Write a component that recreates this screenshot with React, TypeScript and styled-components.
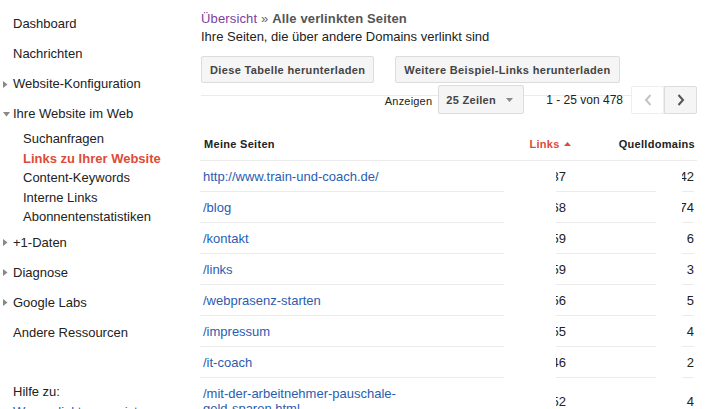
import React from "react";
import styled, { createGlobalStyle } from "styled-components";

const GlobalStyle = createGlobalStyle`
  html, body {
    margin: 0;
    padding: 0;
    background: #fff;
  }
  body {
    font-family: "Liberation Sans", Arial, sans-serif;
    font-size: 13px;
    color: #222;
    overflow: hidden;
  }
`;

interface INavItem {
  label: string;
  arrow?: "right" | "down";
  children?: { label: string; active?: boolean }[];
}

const nav: INavItem[] = [
  { label: "Dashboard" },
  { label: "Nachrichten" },
  { label: "Website-Konfiguration", arrow: "right" },
  {
    label: "Ihre Website im Web",
    arrow: "down",
    children: [
      { label: "Suchanfragen" },
      { label: "Links zu Ihrer Website", active: true },
      { label: "Content-Keywords" },
      { label: "Interne Links" },
      { label: "Abonnentenstatistiken" },
    ],
  },
  { label: "+1-Daten", arrow: "right" },
  { label: "Diagnose", arrow: "right" },
  { label: "Google Labs", arrow: "right" },
  { label: "Andere Ressourcen" },
];

interface IRow {
  page: string;
  links: string;
  domains: string;
}

const rows: IRow[] = [
  { page: "http://www.train-und-coach.de/", links: "337", domains: "142" },
  { page: "/blog", links: "568", domains: "174" },
  { page: "/kontakt", links: "559", domains: "6" },
  { page: "/links", links: "559", domains: "3" },
  { page: "/webprasenz-starten", links: "556", domains: "5" },
  { page: "/impressum", links: "555", domains: "4" },
  { page: "/it-coach", links: "446", domains: "2" },
  { page: "/mit-der-arbeitnehmer-pauschale-geld-sparen.html", links: "552", domains: "4" },
];

const Arrow = ({ dir }: { dir: "right" | "down" }) => (
  <ArrowBox>
    {dir === "right" ? (
      <svg width="5" height="7" viewBox="0 0 5 7">
        <path d="M0 0 L4.5 3.5 L0 7 Z" fill="#888" />
      </svg>
    ) : (
      <svg width="7" height="5" viewBox="0 0 7 5">
        <path d="M0 0 L7 0 L3.5 4.5 Z" fill="#888" />
      </svg>
    )}
  </ArrowBox>
);

const Chevron = ({ dir, color }: { dir: "left" | "right"; color: string }) => (
  <svg width="8" height="12" viewBox="0 0 8 12">
    <path
      d={dir === "left" ? "M6.5 1 L2 6 L6.5 11" : "M1.5 1 L6 6 L1.5 11"}
      stroke={color}
      strokeWidth="2"
      fill="none"
    />
  </svg>
);

const App = () => {
  return (
    <>
      <GlobalStyle />
      <Page>
        <Sidebar>
          {nav.map(item => (
            <React.Fragment key={item.label}>
              <NavItem>
                {item.arrow ? <Arrow dir={item.arrow} /> : null}
                {item.label}
              </NavItem>
              {item.children ? (
                <SubList>
                  {item.children.map(c => (
                    <SubItem key={c.label} active={c.active}>
                      {c.label}
                    </SubItem>
                  ))}
                </SubList>
              ) : null}
            </React.Fragment>
          ))}
          <Separator />
          <HelpTitle>Hilfe zu:</HelpTitle>
          <HelpLink>Wer verlinkt am meisten</HelpLink>
        </Sidebar>

        <Main>
          <Breadcrumb>
            <Crumb>Übersicht</Crumb>
            <Raquo> » </Raquo>
            <CurrentCrumb>Alle verlinkten Seiten</CurrentCrumb>
          </Breadcrumb>
          <Subtitle>Ihre Seiten, die über andere Domains verlinkt sind</Subtitle>

          <ButtonRow>
            <Button>Diese Tabelle herunterladen</Button>
            <Button>Weitere Beispiel-Links herunterladen</Button>
          </ButtonRow>

          <Toolbar>
            <ShowLabel>Anzeigen</ShowLabel>
            <Select>
              <span>25 Zeilen</span>
              <svg width="7" height="4" viewBox="0 0 7 4">
                <path d="M0 0 L7 0 L3.5 4 Z" fill="#888" />
              </svg>
            </Select>
            <Range>1 - 25 von 478</Range>
            <Pager>
              <PagerButton>
                <Chevron dir="left" color="#c4c4c4" />
              </PagerButton>
              <PagerButton active>
                <Chevron dir="right" color="#555" />
              </PagerButton>
            </Pager>
          </Toolbar>

          <Table>
            <HeadRow>
              <HeadPage>Meine Seiten</HeadPage>
              <HeadLinks>
                Links
                <svg width="7" height="4" viewBox="0 0 7 4">
                  <path d="M0 4 L3.5 0 L7 4 Z" fill="#dd4b39" />
                </svg>
              </HeadLinks>
              <HeadDomains>Quelldomains</HeadDomains>
            </HeadRow>
            {rows.map(r => (
              <Row key={r.page}>
                <PageCell>
                  <PageLink>{r.page}</PageLink>
                </PageCell>
                <Gap w={52} />
                <LinksCell>
                  <NumClip w={10}>{r.links}</NumClip>
                </LinksCell>
                <Gap w={26} />
                <DomainsCell>
                  <NumClip w={12}>{r.domains}</NumClip>
                </DomainsCell>
              </Row>
            ))}
          </Table>
        </Main>
      </Page>
    </>
  );
};

export default App;

const Page = styled.div`
  display: flex;
  width: 721px;
  height: 409px;
  overflow: hidden;
`;
const Sidebar = styled.nav`
  width: 188px;
  flex-shrink: 0;
  padding-top: 9px;
  display: flex;
  flex-direction: column;
`;
const NavItem = styled.div`
  height: 30px;
  line-height: 30px;
  padding-left: 13px;
  position: relative;
  color: #222;
  white-space: nowrap;
`;
const ArrowBox = styled.span`
  position: absolute;
  left: 3px;
  top: 0;
  height: 30px;
  display: flex;
  align-items: center;
`;
const SubList = styled.div`
  padding: 0 0 1px 23px;
`;
const SubItem = styled.div<{ active?: boolean }>`
  height: 19.5px;
  line-height: 19.5px;
  white-space: nowrap;
  color: ${p => (p.active ? "#dd4b39" : "#222")};
  font-weight: ${p => (p.active ? "bold" : "normal")};
`;
const Separator = styled.div`
  width: 190px;
  height: 1px;
  background: #ebebeb;
  margin-top: 10px;
`;
const HelpTitle = styled.div`
  margin-top: 26px;
  padding-left: 13px;
  line-height: 16px;
  color: #222;
`;
const HelpLink = styled.div`
  margin-top: 4px;
  padding-left: 13px;
  line-height: 16px;
  color: #2a5db0;
  white-space: nowrap;
`;
const Main = styled.main`
  flex: 1;
  padding: 10px 24px 0 13px;
  min-width: 0;
`;
const Breadcrumb = styled.div`
  line-height: 18px;
  white-space: nowrap;
  letter-spacing: 0.15px;
`;
const Crumb = styled.span`
  color: #7b3f9e;
`;
const Raquo = styled.span`
  color: #666;
`;
const CurrentCrumb = styled.span`
  color: #555;
  font-weight: bold;
`;
const Subtitle = styled.div`
  line-height: 18px;
  color: #222;
  white-space: nowrap;
`;
const ButtonRow = styled.div`
  display: flex;
  gap: 21px;
  margin-top: 10px;
`;
const Button = styled.button`
  height: 27px;
  padding: 0 8px;
  background: #f5f5f5;
  border: 1px solid #dcdcdc;
  border-radius: 2px;
  color: #444;
  font-family: "Liberation Sans", Arial, sans-serif;
  font-size: 11px;
  font-weight: bold;
  letter-spacing: 0.35px;
  white-space: nowrap;
`;
const Toolbar = styled.div`
  margin-top: 2px;
  height: 29px;
  display: flex;
  align-items: center;
  justify-content: flex-end;
  background: linear-gradient(#ebebeb, #ebebeb) no-repeat 0 10px / 100% 1px;
`;
const ShowLabel = styled.span`
  font-size: 11px;
  color: #222;
  margin-right: 6px;
  padding-top: 2px;
  letter-spacing: 0.2px;
`;
const Select = styled.div`
  width: 86px;
  height: 29px;
  box-sizing: border-box;
  background: #f5f5f5;
  border: 1px solid #dcdcdc;
  border-radius: 2px;
  display: flex;
  align-items: center;
  justify-content: space-between;
  padding: 0 10px 0 7px;
  font-size: 11px;
  font-weight: bold;
  color: #444;
  letter-spacing: 0.3px;
`;
const Range = styled.span`
  margin-left: 22px;
  margin-right: 8px;
  font-size: 12px;
  color: #222;
  white-space: nowrap;
`;
const Pager = styled.div`
  display: flex;
`;
const PagerButton = styled.div<{ active?: boolean }>`
  width: 33px;
  height: 28px;
  box-sizing: border-box;
  display: flex;
  align-items: center;
  justify-content: center;
  background: ${p => (p.active ? "#f5f5f5" : "#fff")};
  border: 1px solid ${p => (p.active ? "#dcdcdc" : "#eeeeee")};
  border-radius: ${p => (p.active ? "0 2px 2px 0" : "2px 0 0 2px")};
`;
const Table = styled.div`
  margin-top: 13px;
  width: 496px;
`;
const HeadRow = styled.div`
  height: 34px;
  display: flex;
  align-items: center;
  border-bottom: 1px solid #ebebeb;
  box-sizing: border-box;
  font-size: 11px;
  font-weight: bold;
  letter-spacing: 0.3px;
  margin-left: -1px;
`;
const HeadPage = styled.div`
  flex: 1;
  padding-left: 4px;
  color: #222;
`;
const HeadLinks = styled.div`
  color: #dd4b39;
  display: flex;
  align-items: center;
  gap: 4px;
  margin-right: 48px;
`;
const HeadDomains = styled.div`
  color: #222;
  padding-right: 2px;
`;
const Row = styled.div`
  display: flex;
  align-items: stretch;
`;
const cellBase = `
  border-bottom: 1px solid #ebebeb;
  padding: 8px 0 7px;
  line-height: 15px;
  display: flex;
  align-items: center;
`;
const PageCell = styled.div`
  ${cellBase}
  width: 304px;
  padding-left: 3px;
  box-sizing: border-box;
  margin-left: -1px;
`;
const PageLink = styled.span`
  color: #2a5db0;
  max-width: 212px;
`;
const Gap = styled.div<{ w: number }>`
  width: ${p => p.w}px;
  flex-shrink: 0;
`;
const LinksCell = styled.div`
  ${cellBase}
  width: 100px;
`;
const DomainsCell = styled.div`
  ${cellBase}
  width: 12px;
`;
const NumClip = styled.div<{ w: number }>`
  width: ${p => p.w}px;
  overflow: hidden;
  display: flex;
  justify-content: flex-end;
  white-space: nowrap;
  color: #222;
`;
